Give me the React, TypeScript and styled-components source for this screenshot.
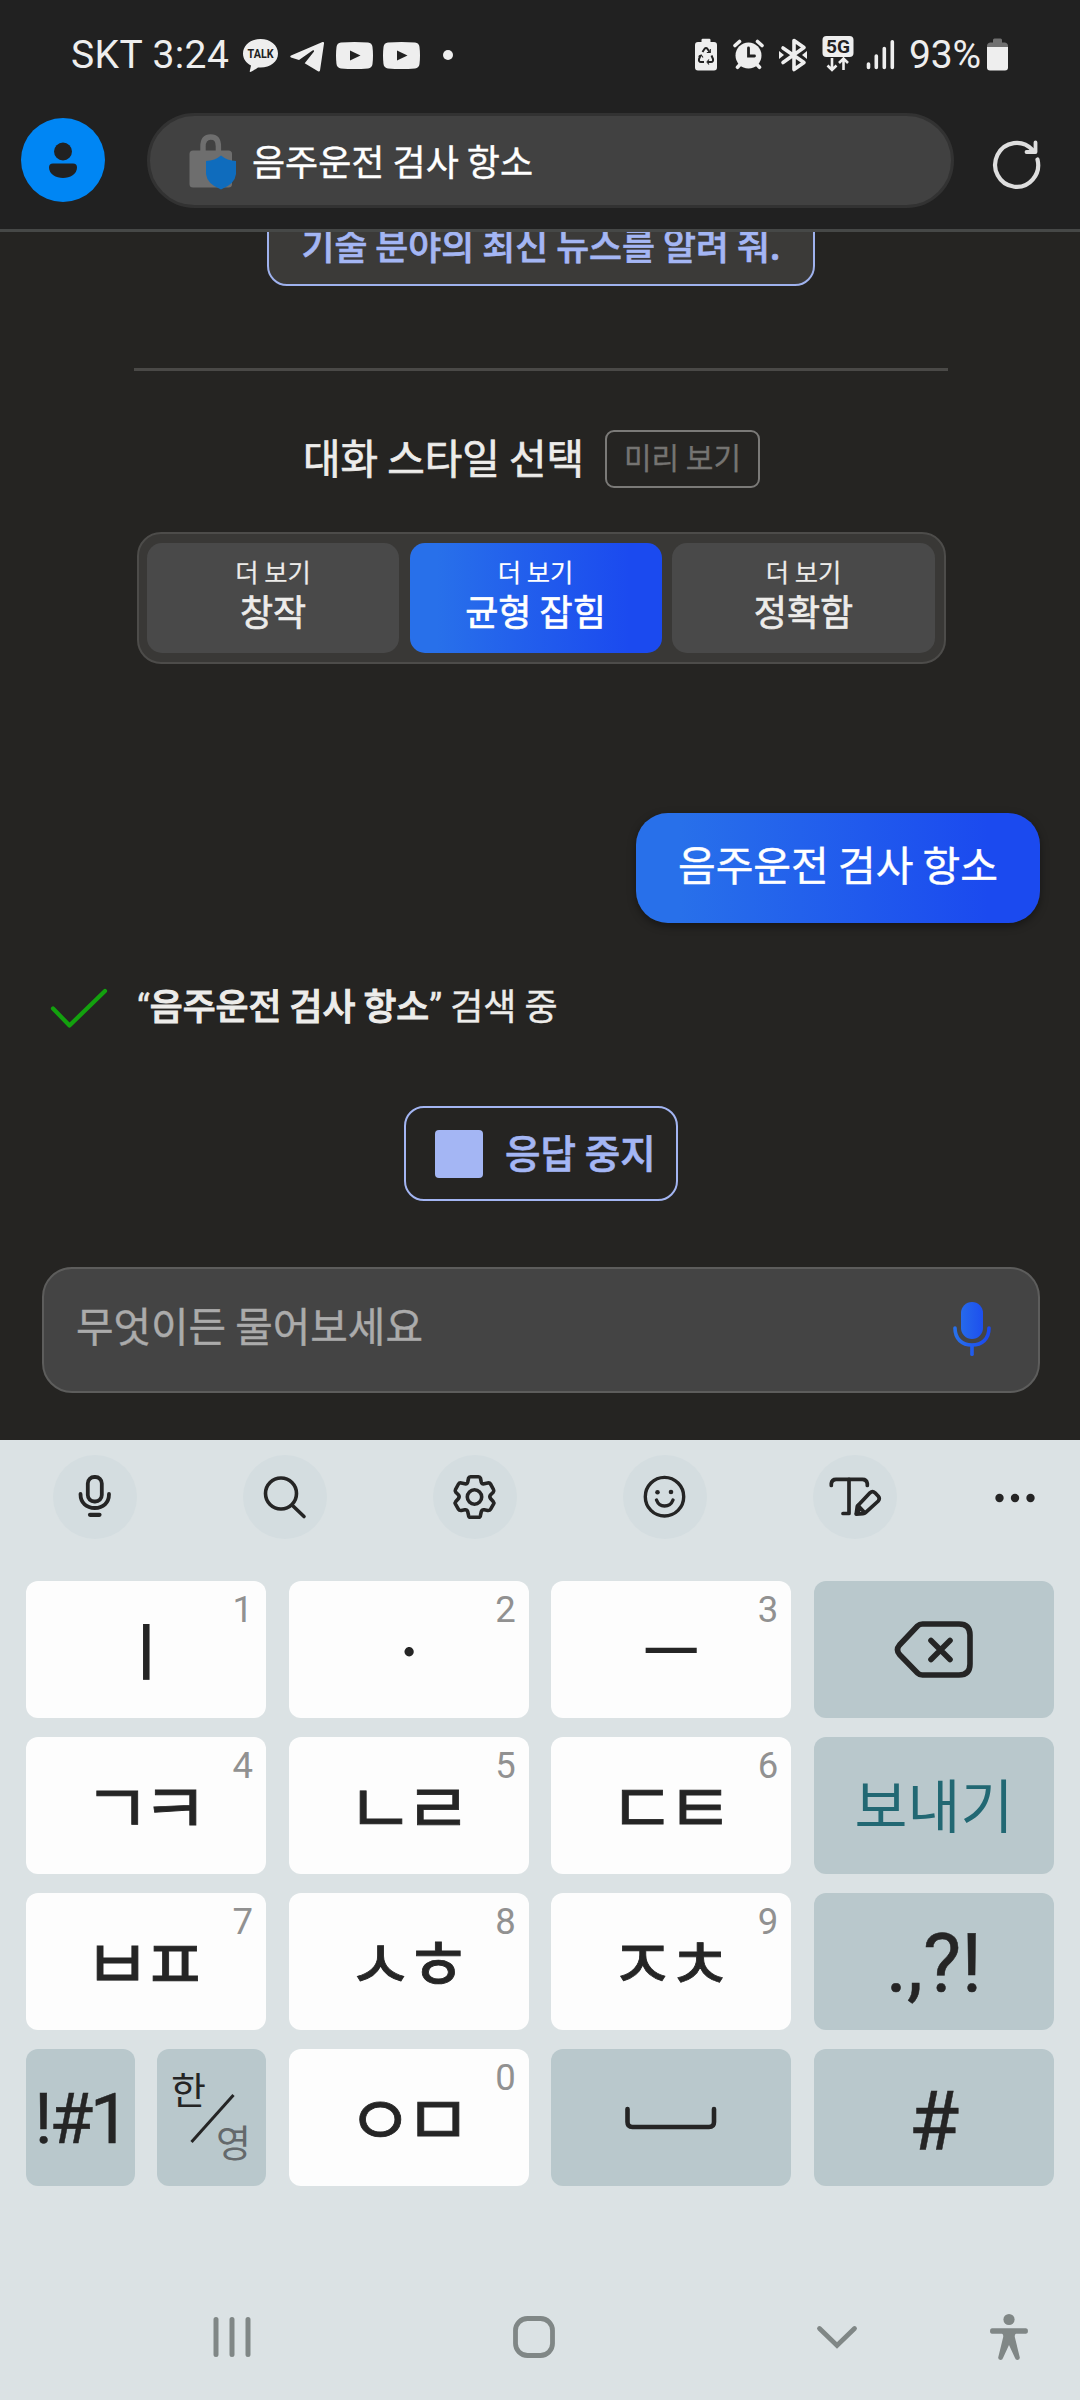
import React from "react";
import styled, { createGlobalStyle } from "styled-components";

const KR = `"Noto Sans CJK KR", "Noto Sans", sans-serif`;
const LATIN = `Roboto, "Noto Sans CJK KR", sans-serif`;
const INK = "#252525";
const BLUE_GRADIENT = "linear-gradient(90deg, #2870ea 10.79%, #1b4aef 87.08%)";

const GlobalStyle = createGlobalStyle`
  *, *::before, *::after { box-sizing: border-box; }
  html, body { margin: 0; padding: 0; background: #252422; }
  button { font: inherit; border: 0; padding: 0; margin: 0; }
`;

const Screen = styled.div`
  width: 1080px;
  height: 2400px;
  display: flex;
  flex-direction: column;
  overflow: hidden;
  background: #252422;
  font-family: ${KR};
  white-space: nowrap;
`;

/* ---------- status bar ---------- */

const Header = styled.header`
  height: 232px;
  flex: none;
  background: #212121;
  border-bottom: 3px solid #464847;
`;

const StatusBar = styled.div`
  display: flex;
  justify-content: space-between;
  height: 113px;
  padding: 34px 72px 0 71px;
  color: #eeeeee;
  font-family: ${LATIN};
  font-size: 39px;
  line-height: 42px;
`;

const StatusGroup = styled.div`
  display: flex;
  align-items: flex-start;
  height: 42px;
`;

const Clock = styled.span`
  width: 172px;
  letter-spacing: 0.4px;
`;

const BatteryPercent = styled.span`
  width: 78px;
  letter-spacing: -0.2px;
`;

const StatusIcon = styled.svg<{ $gap?: number }>`
  display: block;
  flex: none;
  margin-right: ${(p) => p.$gap ?? 0}px;
`;

/* ---------- address bar ---------- */

const AddressRow = styled.div`
  display: flex;
  align-items: center;
  height: 95px;
  padding: 0 36px 0 21px;
`;

const Avatar = styled.div`
  width: 84px;
  height: 84px;
  margin: 0 42px 1px 0;
  border-radius: 50%;
  background: #0086f4;
`;

const AddressField = styled.div`
  display: flex;
  align-items: center;
  width: 807px;
  height: 95px;
  padding-left: 39px;
  border: 3px solid #323232;
  border-radius: 48px;
  background: #414141;
  color: #ffffff;
  font-size: 36px;
  line-height: 52px;
`;

const AddressTitle = styled.span`
  padding-bottom: 2px;
  -webkit-text-stroke: 0.4px currentColor;
`;

const LockIcon = styled.svg`
  display: block;
  margin-right: 13px;
`;

const ReloadIcon = styled.svg`
  display: block;
  margin: 5px 0 0 35px;
`;

/* ---------- conversation ---------- */

const Chat = styled.main`
  display: flex;
  flex-direction: column;
  flex: none;
  height: 1208px;
  overflow: hidden;
  -webkit-text-stroke: 0.4px currentColor;
`;

const SuggestionChip = styled.div`
  align-self: center;
  flex: none;
  width: 548px;
  height: 88px;
  margin: -34px 0 0 2px;
  padding-top: 18px;
  border: 2px solid #9fb2ee;
  border-radius: 20px;
  background: #3b3a38;
  color: #a4b6f4;
  font-size: 35.8px;
  font-weight: 500;
  line-height: 52px;
  text-align: center;
  -webkit-text-stroke: 0.7px currentColor;
`;

const Separator = styled.hr`
  flex: none;
  width: 814px;
  height: 3px;
  margin: 82px 0 0 134px;
  border: 0;
  background: #4a4947;
`;

const StyleHeading = styled.div`
  display: flex;
  align-items: center;
  flex: none;
  height: 58px;
  margin: 59px 0 0 303px;
  color: #edecea;
  font-size: 40.8px;
  line-height: 56px;
`;

const HeadingText = styled.span`
  width: 302px;
  padding-bottom: 4px;
  -webkit-text-stroke: 0.7px currentColor;
`;

const PreviewBadge = styled.span`
  width: 155px;
  height: 58px;
  border: 2px solid #7b7a78;
  border-radius: 9px;
  color: #757472;
  font-size: 30px;
  line-height: 49px;
  text-align: center;
  -webkit-text-stroke: 0.3px currentColor;
`;

const StylePicker = styled.div`
  display: grid;
  grid-template-columns: 252px 252px 263px;
  gap: 10.5px;
  flex: none;
  width: 809px;
  height: 132px;
  margin: 44px 0 0 137px;
  padding: 9px 8px;
  border: 2px solid #4d4c4a;
  border-radius: 24px;
  background: #393836;
`;

const StyleOption = styled.button<{ $active?: boolean }>`
  display: flex;
  flex-direction: column;
  align-items: center;
  height: 110px;
  padding-top: 10px;
  border-radius: 15px;
  background: ${(p) => (p.$active ? BLUE_GRADIENT : "#494949")};
  color: ${(p) => (p.$active ? "#ffffff" : "#edecea")};
  font-size: 36px;
  line-height: 42px;
  -webkit-text-stroke: 0.7px currentColor;
`;

const OptionHint = styled.small`
  font-size: 25.3px;
  line-height: 36px;
  -webkit-text-stroke: 0.2px currentColor;
`;

const UserBubble = styled.div`
  align-self: flex-end;
  flex: none;
  width: 404px;
  height: 110px;
  margin: 149px 40px 0 0;
  border-radius: 32px;
  background: ${BLUE_GRADIENT};
  box-shadow: 0 3px 9px rgba(0, 0, 0, 0.4);
  color: #ffffff;
  font-size: 41px;
  line-height: 101px;
  text-align: center;
`;

const SearchStatus = styled.div`
  display: flex;
  flex: none;
  height: 50px;
  margin: 61px 0 0 50px;
  color: #edecea;
  font-size: 36px;
  line-height: 40px;

  svg {
    display: block;
    margin-right: 29px;
  }

  b {
    font-size: 35.8px;
    font-weight: 500;
    -webkit-text-stroke: 1px currentColor;
  }
`;

const Quote = styled.span`
  font-family: ${LATIN};
`;

const StopButton = styled.button`
  display: flex;
  align-items: center;
  align-self: center;
  flex: none;
  width: 274px;
  height: 95px;
  margin: 72px 0 0 2px;
  padding: 0 0 0 29px;
  border: 2px solid #a3b5f2;
  border-radius: 20px;
  background: transparent;
  color: #a4b6f4;
  font-size: 38.6px;
  font-weight: 500;
  line-height: 56px;
  -webkit-text-stroke: 0.7px currentColor;
`;

const StopSquare = styled.i`
  width: 48px;
  height: 48px;
  margin-right: 22px;
  border-radius: 4px;
  background: #a4b6f4;
`;

const StopLabel = styled.span`
  padding-bottom: 5px;
`;

const Composer = styled.div`
  display: flex;
  justify-content: space-between;
  flex: none;
  width: 998px;
  height: 126px;
  margin: 66px 0 0 42px;
  padding: 0 45px 0 32px;
  border: 2px solid #5d5d5c;
  border-radius: 30px;
  background: #444444;
  color: #ababab;
  font-size: 40.8px;
  line-height: 112px;

  svg {
    display: block;
    margin-top: 30px;
  }
`;

/* ---------- keyboard ---------- */

const Keyboard = styled.section`
  flex: 1;
  background: #dbe2e4;
  color: ${INK};
`;

const Toolbar = styled.div`
  display: flex;
  gap: 106px;
  height: 141px;
  padding: 15px 0 0 53px;
`;

const ToolButton = styled.button`
  width: 84px;
  height: 84px;
  border-radius: 50%;
  background: #d4dde0;

  svg {
    display: block;
  }
`;

const MoreButton = styled.button`
  width: 40px;
  height: 84px;
  margin-left: -8px;
  background: none;
`;

const KeyRows = styled.div`
  display: flex;
  flex-direction: column;
  gap: 19px;
  padding: 0 26px;
`;

const KeyRow = styled.div`
  display: flex;
  justify-content: space-between;
  height: 137px;
`;

const KeyPair = styled.div`
  display: flex;
  justify-content: space-between;
  width: 240px;
`;

const Key = styled.button<{ $tinted?: boolean; $narrow?: boolean }>`
  position: relative;
  display: flex;
  align-items: center;
  justify-content: center;
  width: ${(p) => (p.$narrow ? 109 : 240)}px;
  height: 137px;
  border-radius: 12px;
  background: ${(p) => (p.$tinted ? "#b9c8cc" : "#fdfdfd")};
  color: ${INK};

  svg {
    display: block;
  }
`;

const KeyDigit = styled.span`
  position: absolute;
  top: 7px;
  right: 13px;
  color: #919191;
  font-family: ${LATIN};
  font-size: 36.5px;
  line-height: 44px;
`;

const Vowel = styled.span`
  padding-bottom: 4px;
  font-size: 62px;
  font-weight: 500;
  line-height: 90px;
`;

const Consonants = styled.span`
  margin-right: 9px;
  padding-bottom: 3px;
  font-size: 70px;
  letter-spacing: -9px;
  line-height: 100px;
  transform: scaleX(1.04);
  -webkit-text-stroke: 0.8px currentColor;
`;

const SendLabel = styled.span`
  padding-bottom: 6px;
  color: #226873;
  font-size: 57.5px;
  line-height: 84px;
`;

const SymbolLabel = styled.span<{ $size: number; $tight?: number; $drop?: number }>`
  padding-top: ${(p) => p.$drop ?? 0}px;
  font-family: ${LATIN};
  font-size: ${(p) => p.$size}px;
  letter-spacing: ${(p) => p.$tight ?? 0}px;
  line-height: 100px;
  -webkit-text-stroke: 0.5px currentColor;
`;

const LangKey = styled(Key)`
  align-items: stretch;
  justify-content: space-between;
  padding: 0 15px 0 14px;
  font-size: 38px;
  line-height: 40px;
`;

const LangSlash = styled.svg`
  position: absolute;
  left: 32px;
  top: 43px;
`;

const LangActive = styled.span`
  padding-top: 19px;
`;

const LangOther = styled.span`
  align-self: flex-end;
  padding-bottom: 25px;
  color: #64696b;
`;

const BackspaceIcon = styled.svg`
  margin-left: 3px;
`;

/* ---------- system navigation ---------- */

const NavBar = styled.nav`
  display: flex;
  padding: 127px 0 0 208px;
`;

const NavIcon = styled.svg<{ $gap?: number }>`
  display: block;
  flex: none;
  margin-right: ${(p) => p.$gap ?? 0}px;
`;

const stroke = {
  fill: "none",
  stroke: INK,
  strokeLinecap: "round" as const,
  strokeLinejoin: "round" as const,
};

const YouTube = ({ gap }: { gap: number }) => (
  <StatusIcon $gap={gap} width="37" height="42" viewBox="0 0 37 42">
    <path
      d="M5 8.6Q18.500 7.600 32 8.600Q36 9 36.500 13Q37.500 21.500 36.500 30Q36 34 32 34.400Q18.500 35.400 5 34.400Q1 34 0.500 30Q-0.500 21.500 0.500 13Q1 9 5 8.600Z"
      fill="#eee"
    />
    <path d="M14 16.500L24.500 21.500L14 26.500Z" fill="#212121" />
  </StatusIcon>
);

function StatusIcons() {
  return (
    <StatusBar>
      <StatusGroup>
        <Clock>SKT 3:24</Clock>
        <StatusIcon $gap={12} width="35" height="42" viewBox="0 0 35 42">
          <path
            d="M17.500 5C27.500 5 35 11.200 35 19.500C35 27.700 27.500 33.500 17.500 33.500L15 33.400C12 35.500 9.500 37.300 7.200 38Q6.500 38 6.800 37L8 31.600C3 29 0 24.800 0 19.500C0 11.200 7.500 5 17.500 5Z"
            fill="#eee"
          />
          <text x="4.600" y="24" fontSize="13" fontWeight="700" fontFamily="Roboto" fill="#212121" textLength="26" lengthAdjust="spacingAndGlyphs">
            TALK
          </text>
        </StatusIcon>
        <StatusIcon $gap={12} width="34" height="42" viewBox="0 0 34 42">
          <path d="M1 21.600L32.500 8Q34.300 7.500 34 9.500L30 36.500Q29.600 38 28 37.200L14.700 29.300L24 17.500Q24.500 15.500 22.500 16.500L9 26L1 23.500Q-0.500 22.500 1 21.600Z" fill="#eee" />
        </StatusIcon>
        <YouTube gap={10} />
        <YouTube gap={22} />
        <StatusIcon width="12" height="42" viewBox="0 0 12 42">
          <circle cx="6" cy="21" r="5" fill="#eee" />
        </StatusIcon>
      </StatusGroup>

      <StatusGroup>
        <StatusIcon $gap={16} width="22" height="42" viewBox="0 0 22 42">
          <path d="M6.500 8V6Q6.500 4.800 7.700 4.800H14.300Q15.500 4.800 15.500 6V8H19Q22 8 22 11V33.500Q22 36.500 19 36.500H3Q0 36.500 0 33.500V11Q0 8 3 8Z" fill="#eee" />
          <path d="M7.500 18L9.600 14.800Q11 13.400 12.400 14.800L14.500 18M16.500 21.500L18 25Q18.500 28 16 28H13M9 28H6Q3.500 28 4 25L5.500 21.500" fill="none" stroke="#212121" strokeWidth="2" />
          <path d="M11.800 18.500H15.300V15M14 25.500L12 28L14 30.500M3.500 22.500L6.200 21L8 23.500" fill="none" stroke="#212121" strokeWidth="1.100" />
        </StatusIcon>
        <StatusIcon $gap={15} width="31" height="42" viewBox="0 0 31 42">
          <circle cx="15.500" cy="21.500" r="13" fill="#eee" />
          <path d="M2 11.500L6.500 7.500M29 11.500L24.500 7.500M4.500 33.300L8 29.500M26.500 33.300L23 29.500" stroke="#eee" strokeWidth="3.600" strokeLinecap="round" />
          <path d="M15.500 14V22H21.500" fill="none" stroke="#212121" strokeWidth="2.800" strokeLinecap="round" />
        </StatusIcon>
        <StatusIcon $gap={15} width="28" height="42" viewBox="0 0 28 42">
          <path d="M4 14L25 28.500L15 35.500V6.500L25 13.500L4 28.500" fill="none" stroke="#eee" strokeWidth="3.600" strokeLinecap="round" strokeLinejoin="round" />
          <path d="M0 17L5 21L0 25ZM28 17L23 21L28 25Z" fill="#eee" />
        </StatusIcon>
        <StatusIcon $gap={12} width="32" height="42" viewBox="0 0 32 42">
          <rect x="0.500" y="2" width="31" height="21" rx="4" fill="#eee" />
          <text x="4" y="19" fontSize="18.500" fontWeight="700" fontFamily="Roboto" fill="#212121" textLength="24" lengthAdjust="spacingAndGlyphs">
            5G
          </text>
          <path d="M10 24V36M5.500 31.500L10 36L14.500 31.500M21.500 36V25M17 29L21.500 24.500L26 29" fill="none" stroke="#eee" strokeWidth="2.600" />
        </StatusIcon>
        <StatusIcon $gap={14} width="29" height="42" viewBox="0 0 29 42">
          <path d="M2.500 30V33.500M10.300 22V33.500M18.300 14.500V33.500M26.300 7.700V33.500" stroke="#eee" strokeWidth="3.600" strokeLinecap="round" />
        </StatusIcon>
        <BatteryPercent>93%</BatteryPercent>
        <StatusIcon width="21" height="42" viewBox="0 0 21 42">
          <path d="M6 8.500V6Q6 4.500 7.500 4.500H13.500Q15 4.500 15 6V8.500H18Q21 9 21 12V16H0V12Q0 9 3 8.500Z" fill="#707070" />
          <path d="M0 13H21V33.500Q21 36.500 18 36.500H3Q0 36.500 0 33.500Z" fill="#eee" />
        </StatusIcon>
      </StatusGroup>
    </StatusBar>
  );
}

function ConsonantKey({ digit, children }: { digit: string; children: React.ReactNode }) {
  return (
    <Key>
      <KeyDigit>{digit}</KeyDigit>
      <Consonants>{children}</Consonants>
    </Key>
  );
}

function VowelKey({ digit, children }: { digit: string; children: React.ReactNode }) {
  return (
    <Key>
      <KeyDigit>{digit}</KeyDigit>
      <Vowel>{children}</Vowel>
    </Key>
  );
}

export default function App() {
  return (
    <Screen>
      <GlobalStyle />
      <Header>
        <StatusIcons />
        <AddressRow>
          <Avatar>
            <svg width="84" height="84" viewBox="0 0 84 84">
              <circle cx="42" cy="33.500" r="9" fill="#212121" />
              <path d="M32 45.500H52Q56 45.500 56 49.500C56 56 49 60 42 60S28 56 28 49.500Q28 45.500 32 45.500Z" fill="#212121" />
            </svg>
          </Avatar>
          <AddressField>
            <LockIcon width="50" height="60" viewBox="0 0 50 60">
              <path d="M14 22V15.500Q14 6 21.700 6T29.400 15.500V22" fill="none" stroke="#6e6e6e" strokeWidth="5.400" />
              <rect x="0.500" y="19.500" width="42.500" height="37" rx="3.500" fill="#6e6e6e" />
              <path d="M32 24.500Q38 29.500 47 30V43Q46 53 32 58.500Q18 53 17 43V30Q26 29.500 32 24.500Z" fill="#0f6cbd" />
            </LockIcon>
            <AddressTitle>음주운전 검사 항소</AddressTitle>
          </AddressField>
          <ReloadIcon width="54" height="54" viewBox="0 0 54 54">
            <path d="M48.500 23.500A21.500 22 0 1 1 43.500 14" fill="none" stroke="#dedede" strokeWidth="4.200" strokeLinecap="round" />
            <path d="M46.500 6.500V16H37.500" fill="none" stroke="#dedede" strokeWidth="3.800" strokeLinecap="round" strokeLinejoin="round" />
          </ReloadIcon>
        </AddressRow>
      </Header>

      <Chat>
        <SuggestionChip>기술 분야의 최신 뉴스를 알려 줘.</SuggestionChip>
        <Separator />
        <StyleHeading>
          <HeadingText>대화 스타일 선택</HeadingText>
          <PreviewBadge>미리 보기</PreviewBadge>
        </StyleHeading>
        <StylePicker>
          <StyleOption>
            <OptionHint>더 보기</OptionHint>창작
          </StyleOption>
          <StyleOption $active>
            <OptionHint>더 보기</OptionHint>균형 잡힘
          </StyleOption>
          <StyleOption>
            <OptionHint>더 보기</OptionHint>정확함
          </StyleOption>
        </StylePicker>
        <UserBubble>음주운전 검사 항소</UserBubble>
        <SearchStatus>
          <svg width="58" height="50" viewBox="0 0 58 50">
            <path d="M3 24.500L19.500 41.500L55 7" fill="none" stroke="#13a10e" strokeWidth="4.200" strokeLinecap="round" strokeLinejoin="round" />
          </svg>
          <span>
            <Quote>“</Quote>
            <b>음주운전 검사 항소</b>
            <Quote>”</Quote> 검색 중
          </span>
        </SearchStatus>
        <StopButton>
          <StopSquare />
          <StopLabel>응답 중지</StopLabel>
        </StopButton>
        <Composer>
          무엇이든 물어보세요
          <svg width="42" height="60" viewBox="0 0 42 60">
            <defs>
              <linearGradient id="mic" x1="0" y1="0" x2="42" y2="0" gradientUnits="userSpaceOnUse">
                <stop offset="0.100" stopColor="#2870ea" />
                <stop offset="0.870" stopColor="#1b4aef" />
              </linearGradient>
            </defs>
            <rect x="10" y="3" width="22" height="37" rx="11" fill="url(#mic)" />
            <path d="M4 29C4 40 11 46 21 46S38 40 38 29" fill="none" stroke="url(#mic)" strokeWidth="3.600" strokeLinecap="round" />
            <path d="M19.200 45H22.800V55.500Q22.800 57 21 57T19.200 55.500Z" fill="url(#mic)" />
          </svg>
        </Composer>
      </Chat>

      <Keyboard>
        <Toolbar>
          <ToolButton aria-label="음성 입력">
            <svg width="84" height="84" viewBox="0 0 84 84" {...stroke} strokeWidth="3.800">
              <rect x="34.800" y="22" width="14" height="24.500" rx="6.500" />
              <path d="M27.500 39C27.500 48 33.500 53 41.800 53S56 48 56 39" />
              <path d="M37 59.800H46.500" strokeWidth="4.200" />
            </svg>
          </ToolButton>
          <ToolButton aria-label="검색">
            <svg width="84" height="84" viewBox="0 0 84 84" {...stroke} strokeWidth="3.600">
              <ellipse cx="38" cy="38.500" rx="15.500" ry="15.500" />
              <path d="M49.500 50.500L61 61.500" />
            </svg>
          </ToolButton>
          <ToolButton aria-label="설정">
            <svg width="84" height="84" viewBox="0 0 84 84" {...stroke} strokeWidth="3.600">
              <circle cx="41.500" cy="42" r="7.200" />
              <path d="M37.500 21.700H45.500Q47 21.700 47.400 23L48.300 27.200Q49 29.300 51.200 28.800L54.700 28Q56.700 27.600 57.500 29L60.500 34.500Q61.300 36 60.200 37.300L57.700 39.700Q56 41.700 57.700 43.800L60.200 46.500Q61.300 47.700 60.500 49.200L57.500 54.300Q56.700 55.700 54.700 55.500L51.200 54.800Q49 54.500 48.300 56.600L47.400 60.700Q47 62.200 45.500 62.200H37.500Q36 62.200 35.600 60.700L34.700 56.600Q34 54.500 31.800 54.800L28.300 55.500Q26.300 55.700 25.500 54.300L22.500 49.200Q21.700 47.700 22.800 46.500L25.300 43.800Q27 41.700 25.300 39.700L22.800 37.300Q21.700 36 22.500 34.500L25.500 29Q26.300 27.600 28.300 28L31.800 28.800Q34 29.300 34.700 27.200L35.600 23Q36 21.700 37.500 21.700Z" />
            </svg>
          </ToolButton>
          <ToolButton aria-label="이모티콘">
            <svg width="84" height="84" viewBox="0 0 84 84" {...stroke} strokeWidth="3.400">
              <ellipse cx="41.500" cy="41.700" rx="19.200" ry="19.300" />
              <circle cx="34.500" cy="37.300" r="2.300" fill={INK} stroke="none" />
              <circle cx="48" cy="37" r="2.300" fill={INK} stroke="none" />
              <path d="M33.500 45C35 49 38 51 41.500 51S48.500 49 50 45" />
            </svg>
          </ToolButton>
          <ToolButton aria-label="텍스트 편집">
            <svg width="84" height="84" viewBox="0 0 84 84" {...stroke} strokeWidth="3.700">
              <path d="M18.300 30.500V28.500Q18.800 24.300 23 24.300H49.500Q53.700 24.300 54.300 28.500V30.500" />
              <path d="M36 24.300V58.500H30" />
              <path d="M43.200 59.200L44.300 51.300L57 37.800Q59.500 35.500 62 37.800L65.300 41.200Q67.200 43.500 65.300 46L52.500 57.700Q51.500 58.600 50 58.700Z" />
              <path d="M45 50.500L51.500 57.500M43.500 58.500L46.500 54.500" />
            </svg>
          </ToolButton>
          <MoreButton aria-label="더보기">
            <svg width="40" height="84" viewBox="0 0 40 84" fill={INK}>
              <circle cx="4.500" cy="43" r="4.200" />
              <circle cx="20" cy="43" r="4.200" />
              <circle cx="35.500" cy="43" r="4.200" />
            </svg>
          </MoreButton>
        </Toolbar>

        <KeyRows>
          <KeyRow>
            <VowelKey digit="1">ㅣ</VowelKey>
            <VowelKey digit="2">ㆍ</VowelKey>
            <VowelKey digit="3">ㅡ</VowelKey>
            <Key $tinted aria-label="지우기">
              <BackspaceIcon width="84" height="70" viewBox="0 0 84 70" {...stroke} strokeWidth="5.600">
                <path d="M29.500 9H66Q77 9 77 20V49Q77 60 66 60H29.500Q26.500 60 24.500 58L6.500 39.500Q2.500 34.700 6.500 30L24.500 11Q26.500 9 29.500 9Z" />
                <path d="M38 25.500L57 44.500M57 25.500L38 44.500" />
              </BackspaceIcon>
            </Key>
          </KeyRow>
          <KeyRow>
            <ConsonantKey digit="4">ㄱㅋ</ConsonantKey>
            <ConsonantKey digit="5">ㄴㄹ</ConsonantKey>
            <ConsonantKey digit="6">ㄷㅌ</ConsonantKey>
            <Key $tinted><SendLabel>보내기</SendLabel></Key>
          </KeyRow>
          <KeyRow>
            <ConsonantKey digit="7">ㅂㅍ</ConsonantKey>
            <ConsonantKey digit="8">ㅅㅎ</ConsonantKey>
            <ConsonantKey digit="9">ㅈㅊ</ConsonantKey>
            <Key $tinted><SymbolLabel $size={81} $drop={7}>.,?!</SymbolLabel></Key>
          </KeyRow>
          <KeyRow>
            <KeyPair>
              <Key $tinted $narrow><SymbolLabel $size={71} $tight={-3.2} $drop={2}>!#1</SymbolLabel></Key>
              <LangKey $tinted $narrow>
                <LangActive>한</LangActive>
                <LangSlash width="48" height="54" viewBox="0 0 48 54">
                  <path d="M2.500 50L44.500 3" stroke={INK} strokeWidth="3" />
                </LangSlash>
                <LangOther>영</LangOther>
              </LangKey>
            </KeyPair>
            <ConsonantKey digit="0">ㅇㅁ</ConsonantKey>
            <Key $tinted aria-label="스페이스">
              <svg width="96" height="30" viewBox="0 0 96 30" {...stroke} strokeWidth="4.600">
                <path d="M4.500 6V19Q4.500 24 9.500 24H86Q91 24 91 19V6" />
              </svg>
            </Key>
            <Key $tinted><SymbolLabel $size={82} $drop={6}>#</SymbolLabel></Key>
          </KeyRow>
        </KeyRows>

        <NavBar>
          <NavIcon $gap={254} width="48" height="48" viewBox="0 0 48 48">
            <path d="M8 6.500V41.500M24 6.500V41.500M40 6.500V41.500" stroke="#808786" strokeWidth="5" strokeLinecap="round" />
          </NavIcon>
          <NavIcon $gap={255} width="48" height="48" viewBox="0 0 48 48">
            <rect x="5.500" y="5.500" width="37" height="37" rx="12" fill="none" stroke="#808786" strokeWidth="4.800" />
          </NavIcon>
          <NavIcon $gap={124} width="48" height="48" viewBox="0 0 48 48">
            <path d="M6.500 15.500L24 32.500L41.500 15.500" fill="none" stroke="#808786" strokeWidth="4.800" strokeLinecap="round" />
          </NavIcon>
          <NavIcon width="48" height="48" viewBox="0 0 48 48" fill="#808786">
            <circle cx="24" cy="6.500" r="5.600" />
            <path d="M7 15.300H41Q43 15.300 43 18T41 20.800H31Q29.500 21 29.800 24L34.800 44.500Q35 47 32.500 47Q30.500 47 30 45L24 32L18 45Q17.500 47 15.500 47Q13 47 13.200 44.500L18.200 24Q18.500 21 17 20.800H7Q5 20.800 5 18T7 15.300Z" />
          </NavIcon>
        </NavBar>
      </Keyboard>
    </Screen>
  );
}
